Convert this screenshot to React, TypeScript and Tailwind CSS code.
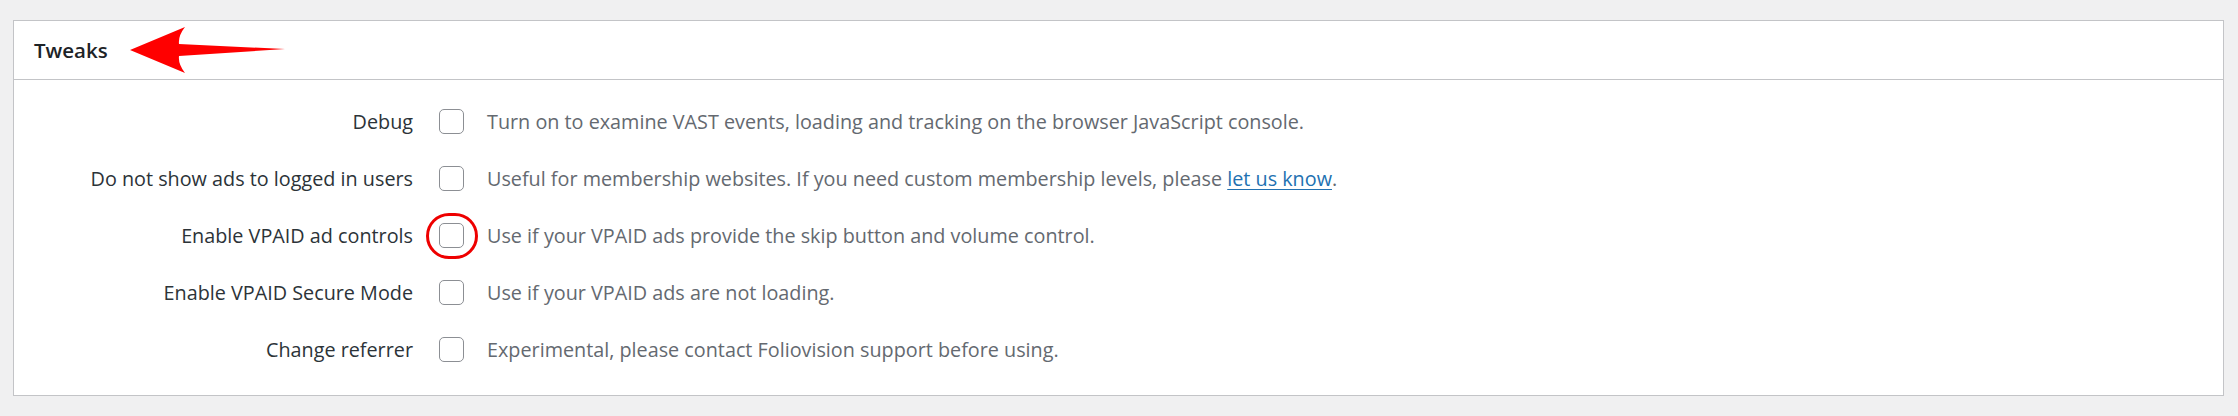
import React from 'react';

const rows = [
  { label: 'Debug', desc: <>Turn on to examine VAST events, loading and tracking on the browser JavaScript console.</> },
  {
    label: 'Do not show ads to logged in users',
    desc: (
      <>
        Useful for membership websites. If you need custom membership levels, please{' '}
        <a href="#" className="text-[#2271b1] underline underline-offset-[3px]">let us know</a>.
      </>
    ),
  },
  { label: 'Enable VPAID ad controls', desc: <>Use if your VPAID ads provide the skip button and volume control.</>, marked: true },
  { label: 'Enable VPAID Secure Mode', desc: <>Use if your VPAID ads are not loading.</> },
  { label: 'Change referrer', desc: <>Experimental, please contact Foliovision support before using.</> },
];

export default function App() {
  return (
    <div className="min-h-[416px] bg-[#f0f0f1] pt-[20px] pl-[13px] pr-[14px] pb-[20px] font-['Open_Sans','Liberation_Sans',sans-serif]">
      <div className="border border-[#c3c4c7] bg-white">
        {/* Panel header */}
        <div className="h-[59px] border-b border-[#c3c4c7] flex items-center pl-[20px] gap-[22px]">
          <h2 className="text-[20.5px] font-semibold text-[#1d2327] leading-none">Tweaks</h2>
          <svg width="158" height="48" viewBox="126 25 158 48" className="shrink-0 -ml-[2px]">
            <path d="M128 49 L183 26 Q176 35 177 43 L283 48 L177 55 Q176 63 183 72 Z" fill="#ff0000" />
          </svg>
        </div>

        {/* Settings rows */}
        <div className="pt-[13px] pb-[17px]">
          {rows.map((row) => (
            <div key={row.label} className="h-[57px] flex items-center">
              <div className="w-[399px] text-right text-[19.8px] text-[#2c3338] shrink-0">{row.label}</div>
              <div className="relative ml-[26px] shrink-0">
                <span className="block w-[25px] h-[25px] rounded-[5px] border border-[#8c8f94] bg-white" />
                {row.marked && (
                  <span className="absolute left-1/2 top-1/2 -translate-x-1/2 -translate-y-1/2 w-[52px] h-[46px] rounded-full border-[3px] border-[#ee0000]" />
                )}
              </div>
              <div className="ml-[23px] text-[19.8px] text-[#646970]">{row.desc}</div>
            </div>
          ))}
        </div>
      </div>
    </div>
  );
}
